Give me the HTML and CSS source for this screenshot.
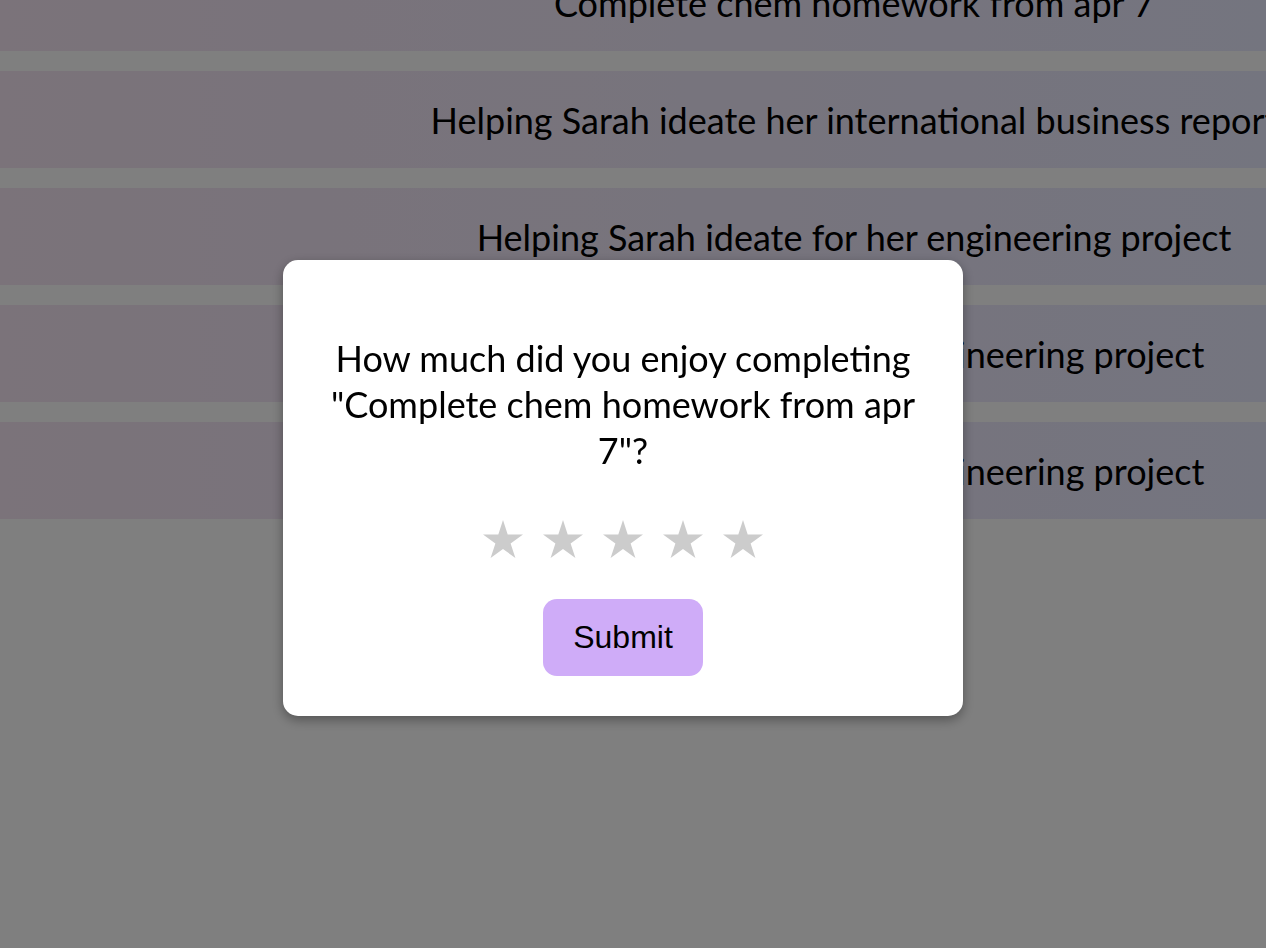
FILE: index.html
```html
<!DOCTYPE html>
<html lang="en">
<head>
<meta charset="utf-8">
<title>Tasks</title>
<link rel="stylesheet" href="styles.css">
</head>
<body>
<main class="task-list">
  <div class="task-row"><span class="task-name">Complete chem homework from apr 7</span></div>
  <div class="task-row"><span class="task-name">Helping Sarah ideate her international business report</span></div>
  <div class="task-row"><span class="task-name">Helping Sarah ideate for her engineering project</span></div>
  <div class="task-row"><span class="task-name">Helping Sarah ideate her engineering project</span></div>
  <div class="task-row"><span class="task-name">Helping Sarah ideate her engineering project</span></div>
</main>

<div class="overlay">
  <div class="modal">
    <h2 class="modal-title">How much did you enjoy completing "Complete chem homework from apr 7"?</h2>
    <div class="stars">
      <svg class="star" viewBox="0 0 40 38" aria-hidden="true"><path d="M20 0 L24.7 14.5 L40 14.5 L27.6 23.5 L32.4 38 L20 29 L7.6 38 L12.4 23.5 L0 14.5 L15.3 14.5 Z"/></svg>
      <svg class="star" viewBox="0 0 40 38" aria-hidden="true"><path d="M20 0 L24.7 14.5 L40 14.5 L27.6 23.5 L32.4 38 L20 29 L7.6 38 L12.4 23.5 L0 14.5 L15.3 14.5 Z"/></svg>
      <svg class="star" viewBox="0 0 40 38" aria-hidden="true"><path d="M20 0 L24.7 14.5 L40 14.5 L27.6 23.5 L32.4 38 L20 29 L7.6 38 L12.4 23.5 L0 14.5 L15.3 14.5 Z"/></svg>
      <svg class="star" viewBox="0 0 40 38" aria-hidden="true"><path d="M20 0 L24.7 14.5 L40 14.5 L27.6 23.5 L32.4 38 L20 29 L7.6 38 L12.4 23.5 L0 14.5 L15.3 14.5 Z"/></svg>
      <svg class="star" viewBox="0 0 40 38" aria-hidden="true"><path d="M20 0 L24.7 14.5 L40 14.5 L27.6 23.5 L32.4 38 L20 29 L7.6 38 L12.4 23.5 L0 14.5 L15.3 14.5 Z"/></svg>
    </div>
    <button class="submit-btn" type="button">Submit</button>
  </div>
</div>
</body>
</html>
```
FILE: styles.css
```css
html, body {
  margin: 0;
  padding: 0;
  background: #ffffff;
  overflow: hidden;
  height: 100%;
}

body {
  font-family: "Lato", "Open Sans", sans-serif;
  color: #000;
}

.task-list {
  display: flex;
  flex-direction: column;
  gap: 20px;
  margin-top: -46px;
}

.task-row {
  height: 97px;
  display: flex;
  align-items: center;
  justify-content: center;
  padding-left: 442px;
  background: linear-gradient(to right, #f6e6f4, #e9eaff);
}

.task-name {
  white-space: nowrap;
  font-size: 36px;
  flex-shrink: 0;
}

.overlay {
  position: fixed;
  inset: 0;
  background: rgba(0, 0, 0, 0.5);
}

.modal {
  position: absolute;
  left: 283px;
  top: 260px;
  width: 600px;
  padding: 40px;
  background: #fff;
  border-radius: 15px;
  box-shadow: 0 4px 12px rgba(0, 0, 0, 0.35);
  display: flex;
  flex-direction: column;
  align-items: center;
  text-align: center;
}

.modal-title {
  margin: 35px 0 25px;
  font-size: 36px;
  line-height: 46px;
  font-weight: 400;
}

.stars {
  display: flex;
  gap: 20px;
  padding: 22px 0;
}

.star {
  width: 40px;
  height: 38px;
  fill: #cccccc;
}

.submit-btn {
  margin-top: 19px;
  padding: 20px 30px;
  border: none;
  border-radius: 14px;
  background: #cfacf8;
  font-family: "Liberation Sans", Arial, sans-serif;
  font-size: 32px;
  line-height: 37px;
  color: #000;
}
```
